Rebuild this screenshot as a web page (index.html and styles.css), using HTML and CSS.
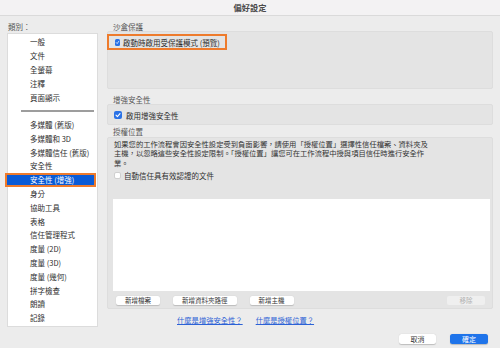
FILE: index.html
```html
<!DOCTYPE html>
<html lang="zh-Hant">
<head>
<meta charset="utf-8">
<title>偏好設定</title>
<link rel="stylesheet" href="styles.css">
</head>
<body>
<div class="window">
  <div class="titlebar">偏好設定</div>
  <div class="main">
    <div class="sidebar">
      <div class="side-label">類別：</div>
      <div class="list">
        <div class="item">一般</div>
        <div class="item">文件</div>
        <div class="item">全螢幕</div>
        <div class="item">注釋</div>
        <div class="item">頁面顯示</div>
        <div class="sep"></div>
        <div class="item item-b">多媒體 (舊版)</div>
        <div class="item item-b">多媒體和 3D</div>
        <div class="item item-b">多媒體信任 (舊版)</div>
        <div class="item item-b">安全性</div>
        <div class="item item-b selected">安全性 (增強)</div>
        <div class="item item-b">身分</div>
        <div class="item item-b">協助工具</div>
        <div class="item item-b">表格</div>
        <div class="item item-b">信任管理程式</div>
        <div class="item item-b">度量 (2D)</div>
        <div class="item item-b">度量 (3D)</div>
        <div class="item item-b">度量 (幾何)</div>
        <div class="item item-b">拼字檢查</div>
        <div class="item item-b">朗讀</div>
        <div class="item item-b">記錄</div>
      </div>
    </div>
    <div class="content">
      <div class="sec-label">沙盒保護</div>
      <div class="box box-sandbox">
        <div class="check-row highlight">
          <span class="cb cb-small"><svg viewBox="0 0 6 7" width="6" height="7"><path d="M1.5 3.6 L2.6 4.8 L4.6 2" fill="none" stroke="#fff" stroke-width="0.9" stroke-linecap="round" stroke-linejoin="round"/></svg></span>
          <span>啟動時啟用受保護模式 (預覽)</span>
        </div>
      </div>
      <div class="sec-label sec-label-2">增強安全性</div>
      <div class="box box-enh">
        <div class="check-row">
          <span class="cb cb-on"><svg viewBox="0 0 8 8" width="8" height="8"><path d="M2 4.2 L3.4 5.6 L6 2.6" fill="none" stroke="#fff" stroke-width="1.1" stroke-linecap="round" stroke-linejoin="round"/></svg></span>
          <span>啟用增強安全性</span>
        </div>
      </div>
      <div class="sec-label sec-label-3">授權位置</div>
      <div class="box box-priv">
        <p class="desc">如果您的工作流程會因安全性設定受到負面影響，請使用「授權位置」選擇性信任檔案、資料夾及<br>主機，以忽略這些安全性設定限制。「授權位置」讓您可在工作流程中授與項目信任時進行安全作<br>業。</p>
        <div class="check-row check-row-2">
          <span class="cb cb-off"></span>
          <span>自動信任具有效認證的文件</span>
        </div>
        <div class="whitelist"></div>
        <div class="btn-row">
          <button class="btn">新增檔案</button>
          <button class="btn">新增資料夾路徑</button>
          <button class="btn">新增主機</button>
          <button class="btn btn-disabled">移除</button>
        </div>
      </div>
      <div class="links">
        <a class="link" href="#">什麼是增強安全性？</a>
        <a class="link" href="#">什麼是授權位置？</a>
      </div>
    </div>
  </div>
  <div class="footer">
    <button class="fbtn">取消</button>
    <button class="fbtn fbtn-primary">確定</button>
  </div>
</div>
</body>
</html>
```

FILE: styles.css
```css
* {
  box-sizing: border-box;
}

html, body {
  margin: 0;
  padding: 0;
}

body {
  width: 500px;
  height: 348px;
  overflow: hidden;
  background: #ececec;
  font-family: "Noto Sans CJK TC", "Noto Sans", sans-serif;
  color: #333;
  font-size: 7.5px;
}

.window {
  width: 500px;
  height: 348px;
  background: #ececec;
}

.titlebar {
  height: 16px;
  line-height: 15px;
  text-align: center;
  background: #f3f2f3;
  border-bottom: 1px solid #dadada;
  font-size: 8.2px;
  font-weight: bold;
  color: #4b4b4b;
}

.main {
  display: flex;
  padding-left: 7px;
}

.sidebar {
  width: 91px;
  flex: none;
}

.side-label {
  height: 9px;
  line-height: 9px;
  margin-top: 6px;
  padding-left: 1px;
  color: #555;
}

.list {
  margin-top: 2px;
  height: 294px;
  background: #fff;
  border: 1px solid #dcdcdc;
  padding-top: 1px;
}

.item {
  height: 14px;
  line-height: 14px;
  padding-left: 22px;
  color: #2e2e2e;
  white-space: nowrap;
}

.item-b {
  height: 13.8px;
  line-height: 13.8px;
}

.sep {
  height: 13px;
  padding-top: 5px;
  margin: 0 3px 0 13px;
}

.sep::before {
  content: "";
  display: block;
  height: 1.5px;
  background: #9d9d9d;
}

.selected {
  margin-left: -3px;
  margin-right: 1px;
  padding-left: 23px;
  background: #0a5bd6;
  color: #fff;
  border: 2px solid #ee7b2c;
  line-height: 9.8px;
}

.content {
  flex: 1;
  margin-left: 9px;
  margin-right: 7px;
}

.sec-label {
  height: 9px;
  line-height: 9px;
  margin-top: 6px;
  padding-left: 6px;
  color: #555;
}

.sec-label-2 {
  margin-top: 6px;
}

.sec-label-3 {
  margin-top: 1.5px;
  height: 10px;
  line-height: 10px;
}

.box {
  background: #e4e4e4;
  border: 1px solid #dddddd;
  border-radius: 2px;
}

.box-sandbox {
  height: 58px;
  padding-top: 2px;
}

.box-enh {
  height: 21px;
  padding-top: 5px;
}

.box-priv {
  height: 172px;
  padding: 2px 5px 0 5px;
}

.check-row {
  display: flex;
  align-items: center;
  gap: 4px;
  height: 10px;
  padding-left: 6px;
  white-space: nowrap;
  color: #2e2e2e;
}

.highlight {
  width: 120px;
  height: 16px;
  margin-left: -1px;
  padding-left: 6px;
  border: 2px solid #ee7b2c;
  gap: 3px;
}

.cb {
  display: inline-flex;
  align-items: center;
  justify-content: center;
  flex: none;
  border-radius: 2px;
}

.cb-small {
  width: 5px;
  height: 7px;
  background: #2a72e6;
  border-radius: 1.5px;
}

.cb-on {
  width: 8px;
  height: 8px;
  background: #2a72e6;
}

.cb-off {
  width: 7px;
  height: 7px;
  background: #fff;
  border: 0.5px solid #d0d0d0;
}

.desc {
  margin: 0;
  padding-left: 1px;
  font-size: 7.3px;
  line-height: 9.5px;
  color: #333;
  white-space: nowrap;
}

.check-row-2 {
  margin-top: 2px;
  padding-left: 1px;
  gap: 3px;
}

.whitelist {
  margin-top: 19px;
  height: 92px;
  margin-right: -3px;
  background: #fff;
}

.btn-row {
  display: flex;
  gap: 13px;
  margin-top: 5px;
  padding-left: 3px;
}

.btn {
  height: 9px;
  padding: 0 9px;
  border: none;
  border-radius: 2px;
  background: #fff;
  box-shadow: 0 0.5px 1px rgba(0, 0, 0, 0.18);
  font-family: inherit;
  font-size: 6.5px;
  line-height: 9px;
  color: #333;
}

.btn-disabled {
  margin-left: auto;
  margin-right: 2px;
  width: 38px;
  background: #efefef;
  color: #b0b0b0;
  box-shadow: none;
}

.links {
  display: flex;
  gap: 13px;
  margin-top: 6px;
  padding-left: 70px;
  height: 10px;
  line-height: 10px;
}

.link {
  color: #2c62d6;
  text-decoration: underline;
  font-size: 7.3px;
}

.footer {
  display: flex;
  justify-content: flex-end;
  gap: 14px;
  margin-top: 7px;
  padding-right: 12px;
}

.fbtn {
  width: 37px;
  height: 10px;
  padding: 0;
  border: none;
  border-radius: 2.5px;
  background: #fff;
  box-shadow: 0 0.5px 1px rgba(0, 0, 0, 0.2);
  font-family: inherit;
  font-size: 7px;
  line-height: 10px;
  color: #333;
}

.fbtn-primary {
  width: 38px;
  background: #1f74ea;
  color: #fff;
}
```
